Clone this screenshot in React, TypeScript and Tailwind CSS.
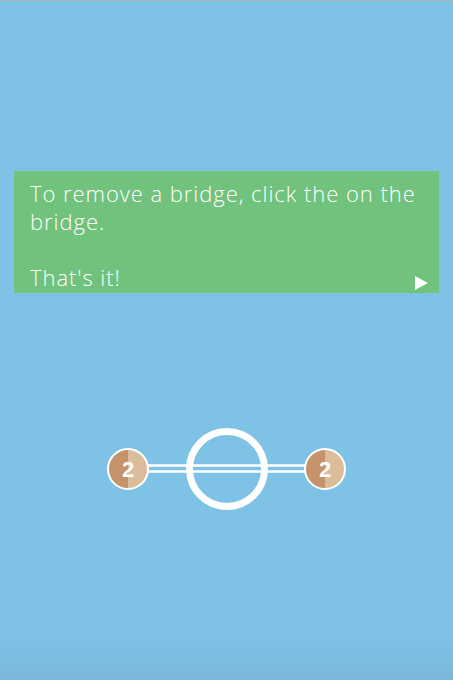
import React from 'react';

const Node: React.FC<{ cx: number; cy: number; id: string }> = ({ cx, cy, id }) => (
  <g>
    <defs>
      <linearGradient id={id} x1="0" x2="1" y1="0" y2="0">
        <stop offset="0.5" stopColor="#c4936a" />
        <stop offset="0.5" stopColor="#dbbd9c" />
      </linearGradient>
    </defs>
    <circle cx={cx} cy={cy} r={20} fill={`url(#${id})`} stroke="#ffffff" strokeWidth={2} />
    <text
      x={cx}
      y={cy + 8}
      textAnchor="middle"
      fill="#ffffff"
      fontSize={22}
      fontWeight={700}
      fontFamily="'Liberation Sans', Arial, sans-serif"
    >
      2
    </text>
  </g>
);

const App: React.FC = () => {
  return (
    <div className="w-[453px] h-[680px] overflow-hidden border-t border-[#a9b4c0] bg-gradient-to-b from-[#7ec3e6] via-[#7ec3e6] via-93% to-[#7ab9dc] flex flex-col">
      {/* Tutorial panel */}
      <div
        className="mx-[14px] mt-[170px] h-[122px] bg-[#70c27d] px-[16px] pt-[8px] relative text-white text-[22px] leading-[28px] font-light tracking-[0.95px]"
        style={{ fontFamily: "'Open Sans', 'Noto Sans', sans-serif" }}
      >
        <p>To remove a bridge, click the on the bridge.</p>
        <p className="mt-[28px]">That's it!</p>
        <svg className="absolute right-[10px] bottom-[2px]" width="15" height="16" viewBox="0 0 15 16">
          <polygon points="1,1 14,8 1,15" fill="#ffffff" />
        </svg>
      </div>

      {/* Puzzle diagram */}
      <div className="mt-[132px] flex justify-center">
        <svg width="453" height="90" viewBox="0 424 453 90">
          <line x1={148} y1={464.5} x2={305} y2={464.5} stroke="#ffffff" strokeWidth={2.5} />
          <line x1={148} y1={470.5} x2={305} y2={470.5} stroke="#ffffff" strokeWidth={2.5} />
          <circle cx={227} cy={468} r={37.5} fill="none" stroke="#ffffff" strokeWidth={7} />
          <Node cx={128} cy={468} id="n1" />
          <Node cx={325} cy={468} id="n2" />
        </svg>
      </div>
    </div>
  );
};

export default App;
